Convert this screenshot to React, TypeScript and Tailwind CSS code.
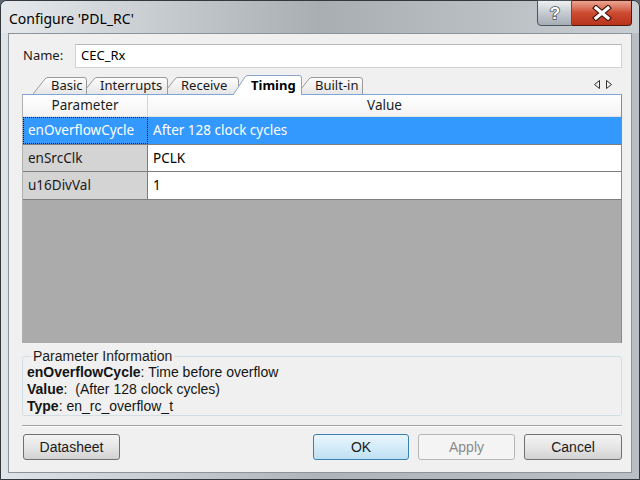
import React from 'react';

const tabs = [
  { label: 'Basic', w: 54, cls: 'w-[54px] z-[5]' },
  { label: 'Interrupts', w: 86, cls: 'w-[86px] -ml-[5px] z-[4]' },
  { label: 'Receive', w: 76, cls: 'w-[76px] -ml-[5px] z-[3]' },
  { label: 'Timing', w: 69, cls: 'w-[69px] -ml-[6px] z-[10]', active: true },
  { label: 'Built-in', w: 66, cls: 'w-[66px] -ml-[5px] z-[1]' },
];

const rows = [
  { name: 'enOverflowCycle', value: 'After 128 clock cycles', selected: true, h: 'h-[28px]' },
  { name: 'enSrcClk', value: 'PCLK', h: 'h-[27px]' },
  { name: 'u16DivVal', value: '1', h: 'h-[28px]' },
];

const Tab: React.FC<{ label: string; w: number; cls: string; active?: boolean }> = ({ label, w, cls, active }) => {
  const h = active ? 20 : 17;
  const id = `tg-${label}`;
  return (
    <div
      className={`relative shrink-0 flex items-center pl-[18px] ${cls} ${
        active ? 'h-[20px] -mb-px font-bold text-black' : 'h-[17px] text-[#1a1a1a]'
      }`}
    >
      <svg className="absolute left-0 top-0" width={w} height={h}>
        <defs>
          <linearGradient id={id} x1="0" y1="0" x2="0" y2="1">
            <stop offset="0" stopColor="#fdfdfd" />
            <stop offset="1" stopColor="#e6e6e6" />
          </linearGradient>
        </defs>
        <path
          d={`M0,${h} L12,2 Q13,0.5 15,0.5 L${w - 3},0.5 Q${w - 0.5},0.5 ${w - 0.5},3 L${w - 0.5},${h} Z`}
          fill={active ? '#ffffff' : `url(#${id})`}
        />
        <path
          d={`M0,${h} L12,2 Q13,0.5 15,0.5 L${w - 3},0.5 Q${w - 0.5},0.5 ${w - 0.5},3 L${w - 0.5},${h}`}
          fill="none"
          stroke={active ? '#8aa6c9' : '#9a9a9a'}
          strokeWidth="1"
        />
      </svg>
      <span className="relative leading-none">{label}</span>
    </div>
  );
};

const App: React.FC = () => {
  return (
    <div className="w-[640px] h-[480px] bg-[#5d6670] font-['Noto_Sans',sans-serif]">
      <div className="w-full h-full flex flex-col rounded-t-[7px] border border-[#33383d] bg-gradient-to-r from-[#dfe4e8] via-[#aeb4b9] to-[#b9bfc4]">
        {/* title bar */}
        <div className="h-[32px] flex justify-between bg-gradient-to-r from-[#e6eaed] via-[#a9aeb3] to-[#c9ced2] rounded-t-[6px]">
          <span className="pl-[8px] pt-[7px] text-[14px] text-black">Configure 'PDL_RC'</span>
          <div className="flex -mt-px mr-[7px] h-[26px]">
            <div className="w-[35px] flex items-center justify-center rounded-bl-[4px] border border-[#4d545b] bg-gradient-to-b from-[#eef1f3] via-[#c4cad0] to-[#a5adb4]">
              <svg width="16" height="18">
                <text
                  x="8"
                  y="15"
                  textAnchor="middle"
                  fontSize="17"
                  fontWeight="bold"
                  fontFamily="Liberation Sans, sans-serif"
                  fill="#ffffff"
                  stroke="#4a4f55"
                  strokeWidth="1.5"
                  paintOrder="stroke"
                >
                  ?
                </text>
              </svg>
            </div>
            <div className="w-[60px] flex items-center justify-center rounded-br-[4px] border border-l-0 border-[#4a1a12] bg-gradient-to-b from-[#e9a693] via-[#cc4a30] to-[#b8341c]">
              <svg width="22" height="16" viewBox="0 0 22 16">
                <path d="M5,3 L17,13 M17,3 L5,13" stroke="#3c120a" strokeWidth="5.5" strokeLinecap="square" />
                <path d="M5,3 L17,13 M17,3 L5,13" stroke="#ffffff" strokeWidth="3.2" strokeLinecap="square" />
              </svg>
            </div>
          </div>
        </div>

        {/* content */}
        <div className="mx-[7px] h-[440px] flex flex-col border border-[#8c949b] bg-[#f0f0f0] pl-[13px] pr-[9px] pt-[10px]">
          {/* name */}
          <div className="flex items-center h-[24px]">
            <span className="w-[53px] pl-[1px] text-[13px] text-[#1a1a1a]">Name:</span>
            <div className="flex-1 h-[24px] flex items-center pl-[5px] bg-white border border-[#d2d2d2] border-t-[#b8b8b8] text-[13px] text-black">
              CEC_Rx
            </div>
          </div>

          {/* tab strip */}
          <div className="mt-[7px] h-[20px] flex items-end pl-[11px] border-b border-[#7ea6d8] text-[13px]">
            {tabs.map((t) => (
              <Tab key={t.label} {...t} />
            ))}
            <div className="ml-auto mr-[10px] mb-[5px] flex items-center gap-[6px]">
              <svg width="6" height="9">
                <path d="M5.5,0.5 L0.5,4.5 L5.5,8.5 Z" fill="none" stroke="#303030" />
              </svg>
              <svg width="6" height="9">
                <path d="M0.5,0.5 L5.5,4.5 L0.5,8.5 Z" fill="none" stroke="#303030" />
              </svg>
            </div>
          </div>

          {/* property grid */}
          <div className="h-[248px] flex flex-col border-x border-[#8a8a8a] border-l-[#b0b0b0] text-[13.5px]">
            <div className="h-[22px] shrink-0 grid grid-cols-[125px_1fr] bg-gradient-to-b from-[#ffffff] to-[#f3f3f3] border-b border-[#e2e2e2] text-[#1e1e1e]">
              <div className="flex items-center justify-center border-r border-[#d5d5d5]">Parameter</div>
              <div className="flex items-center justify-center">Value</div>
            </div>
            {rows.map((r) => (
              <div key={r.name} className={`${r.h} shrink-0 grid grid-cols-[125px_1fr] border-b border-[#7d7d7d]`}>
                <div
                  className={`flex items-center pl-[5px] border-r border-[#7d7d7d] ${
                    r.selected
                      ? 'bg-[#3399ff] text-white outline-1 outline-dotted outline-[#1a1a1a] -outline-offset-1'
                      : 'bg-[#d4d4d4] text-[#1a1a1a]'
                  }`}
                >
                  {r.name}
                </div>
                <div
                  className={`flex items-center pl-[5px] ${
                    r.selected ? 'bg-[#3399ff] text-white' : 'bg-white text-black'
                  }`}
                >
                  {r.value}
                </div>
              </div>
            ))}
            <div className="flex-1 bg-[#ababab]" />
          </div>

          {/* parameter information */}
          <fieldset className="mt-[6px] border border-[#d3dde4] rounded-[3px] pl-[4px] font-['Liberation_Sans',Arial,sans-serif] text-[14px] text-[#141414]">
            <legend className="ml-[4px] px-[2px] leading-[15px] text-[#1c1c1c]">Parameter Information</legend>
            <div className="leading-[17px]">
              <b>enOverflowCycle</b>: Time before overflow
            </div>
            <div className="leading-[17px]">
              <b>Value</b>:&nbsp; (After 128 clock cycles)
            </div>
            <div className="leading-[17px]">
              <b>Type</b>: en_rc_overflow_t
            </div>
          </fieldset>

          {/* separator */}
          <div className="mt-[9px] h-[2px] border-t border-[#a0a0a0] border-b-white border-b" />

          {/* buttons */}
          <div className="mt-[7px] flex items-center pl-[1px] font-['Liberation_Sans',Arial,sans-serif] text-[14px]">
            <div className="w-[97px] h-[26px] flex items-center justify-center rounded-[3px] border border-[#707070] bg-gradient-to-b from-[#f3f3f3] via-[#e6e6e6] to-[#d2d2d2] text-[#1a1a1a]">
              Datasheet
            </div>
            <div className="ml-auto flex gap-[9px]">
              <div className="w-[96px] h-[26px] flex items-center justify-center rounded-[3px] border border-[#3c7fb1] bg-gradient-to-b from-[#e8f5fc] via-[#d5ecf9] to-[#bde0f3] text-[#1a1a1a]">
                OK
              </div>
              <div className="w-[97px] h-[26px] flex items-center justify-center rounded-[3px] border border-[#b4b8bb] bg-[#f4f4f4] text-[#8a8a8a]">
                Apply
              </div>
              <div className="w-[98px] h-[26px] flex items-center justify-center rounded-[3px] border border-[#707070] bg-gradient-to-b from-[#f3f3f3] via-[#e6e6e6] to-[#d2d2d2] text-[#1a1a1a]">
                Cancel
              </div>
            </div>
          </div>
        </div>
      </div>
    </div>
  );
};

export default App;
